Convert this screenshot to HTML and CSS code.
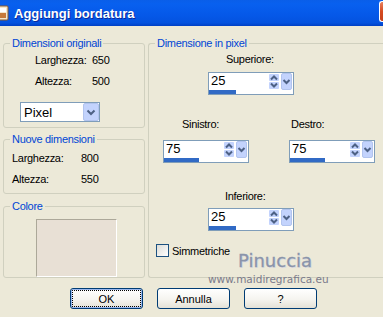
FILE: index.html
```html
<!DOCTYPE html>
<html>
<head>
    <meta charset="UTF-8">
    <title>Aggiungi bordatura</title>
    <link rel="stylesheet" href="styles.css">
</head>
<body>

<div class="window">
    <div class="titlebar">
        <svg class="app-icon" width="9" height="16" viewBox="7 0 9 16">
            <rect x="1" y="1" width="14" height="14" rx="1" fill="#f4e7cc" stroke="#8a5a2c"/>
            <rect x="3" y="8" width="10" height="5" fill="#c77a3a"/>
            <rect x="3" y="3" width="10" height="4" fill="#ffffff"/>
        </svg>
        <span class="title">Aggiungi bordatura</span>
        <span class="close-btn"></span>
    </div>

    <div class="content">
        <div class="panels">
            <div class="left-col">
                <fieldset class="group group-orig">
                    <legend>Dimensioni originali</legend>
                    <div class="dims dims-orig">
                        <span>Larghezza:</span><span>650</span>
                        <span>Altezza:</span><span>500</span>
                    </div>
                    <div class="select">
                        <span class="select-text">Pixel</span>
                        <svg class="select-btn" width="16" height="18" viewBox="0 0 16 18">
                            <rect x="0.5" y="0.5" width="15" height="17" rx="1.5" fill="#c3d3fd" stroke="#b2c4ee"/>
                            <path d="M4.5 7.5 L8 11 L11.5 7.5" stroke="#4d6185" stroke-width="2" fill="none"/>
                        </svg>
                    </div>
                </fieldset>

                <fieldset class="group group-new">
                    <legend>Nuove dimensioni</legend>
                    <div class="dims dims-new">
                        <span>Larghezza:</span><span>800</span>
                        <span>Altezza:</span><span>550</span>
                    </div>
                </fieldset>

                <fieldset class="group group-color">
                    <legend>Colore</legend>
                    <div class="swatch"></div>
                </fieldset>
            </div>

            <fieldset class="group group-pixel">
                <legend>Dimensione in pixel</legend>

                <div class="lbl lbl-sup">Superiore:</div>
                <div class="spinner spin-top">
                    <div class="spin-field">
                        <span class="spin-value">25</span>
                        <svg class="spin-btns" width="24" height="17" viewBox="0 0 24 17">
                            <rect x="0" y="1" width="10" height="7" rx="1" fill="#c3d3fd"/>
                            <rect x="0" y="9" width="10" height="7" rx="1" fill="#c3d3fd"/>
                            <path d="M2 6.5 L5 3.5 L8 6.5" stroke="#4d6185" stroke-width="2" fill="none"/>
                            <path d="M2 10.5 L5 13.5 L8 10.5" stroke="#4d6185" stroke-width="2" fill="none"/>
                            <rect x="12.5" y="0.5" width="10" height="16" rx="1.5" fill="#c3d3fd" stroke="#b2c4ee"/>
                            <path d="M14.5 7 L17.5 10 L20.5 7" stroke="#4d6185" stroke-width="2" fill="none"/>
                        </svg>
                    </div>
                    <div class="spin-track"><div class="spin-fill" style="width:27px"></div></div>
                </div>

                <div class="side-row">
                    <div class="side-col side-left">
                        <div class="lbl lbl-left">Sinistro:</div>
                        <div class="spinner">
                            <div class="spin-field">
                                <span class="spin-value">75</span>
                                <svg class="spin-btns" width="24" height="17" viewBox="0 0 24 17">
                                    <rect x="0" y="1" width="10" height="7" rx="1" fill="#c3d3fd"/>
                                    <rect x="0" y="9" width="10" height="7" rx="1" fill="#c3d3fd"/>
                                    <path d="M2 6.5 L5 3.5 L8 6.5" stroke="#4d6185" stroke-width="2" fill="none"/>
                                    <path d="M2 10.5 L5 13.5 L8 10.5" stroke="#4d6185" stroke-width="2" fill="none"/>
                                    <rect x="12.5" y="0.5" width="10" height="16" rx="1.5" fill="#c3d3fd" stroke="#b2c4ee"/>
                                    <path d="M14.5 7 L17.5 10 L20.5 7" stroke="#4d6185" stroke-width="2" fill="none"/>
                                </svg>
                            </div>
                            <div class="spin-track"><div class="spin-fill" style="width:35px"></div></div>
                        </div>
                    </div>
                    <div class="side-col side-right">
                        <div class="lbl lbl-right">Destro:</div>
                        <div class="spinner">
                            <div class="spin-field">
                                <span class="spin-value">75</span>
                                <svg class="spin-btns" width="24" height="17" viewBox="0 0 24 17">
                                    <rect x="0" y="1" width="10" height="7" rx="1" fill="#c3d3fd"/>
                                    <rect x="0" y="9" width="10" height="7" rx="1" fill="#c3d3fd"/>
                                    <path d="M2 6.5 L5 3.5 L8 6.5" stroke="#4d6185" stroke-width="2" fill="none"/>
                                    <path d="M2 10.5 L5 13.5 L8 10.5" stroke="#4d6185" stroke-width="2" fill="none"/>
                                    <rect x="12.5" y="0.5" width="10" height="16" rx="1.5" fill="#c3d3fd" stroke="#b2c4ee"/>
                                    <path d="M14.5 7 L17.5 10 L20.5 7" stroke="#4d6185" stroke-width="2" fill="none"/>
                                </svg>
                            </div>
                            <div class="spin-track"><div class="spin-fill" style="width:35px"></div></div>
                        </div>
                    </div>
                </div>

                <div class="lbl lbl-inf">Inferiore:</div>
                <div class="spinner spin-bottom">
                    <div class="spin-field">
                        <span class="spin-value">25</span>
                        <svg class="spin-btns" width="24" height="17" viewBox="0 0 24 17">
                            <rect x="0" y="1" width="10" height="7" rx="1" fill="#c3d3fd"/>
                            <rect x="0" y="9" width="10" height="7" rx="1" fill="#c3d3fd"/>
                            <path d="M2 6.5 L5 3.5 L8 6.5" stroke="#4d6185" stroke-width="2" fill="none"/>
                            <path d="M2 10.5 L5 13.5 L8 10.5" stroke="#4d6185" stroke-width="2" fill="none"/>
                            <rect x="12.5" y="0.5" width="10" height="16" rx="1.5" fill="#c3d3fd" stroke="#b2c4ee"/>
                            <path d="M14.5 7 L17.5 10 L20.5 7" stroke="#4d6185" stroke-width="2" fill="none"/>
                        </svg>
                    </div>
                    <div class="spin-track"><div class="spin-fill" style="width:27px"></div></div>
                </div>

                <div class="check-row">
                    <span class="checkbox"></span>
                    <span>Simmetriche</span>
                </div>
            </fieldset>
        </div>

        <div class="buttons">
            <div class="btn btn-default">OK</div>
            <div class="btn">Annulla</div>
            <div class="btn">?</div>
        </div>
    </div>

    <div class="watermark">Pinuccia</div>
    <div class="watermark-url">www.maidiregrafica.eu</div>
</div>

</body>
</html>
```

FILE: styles.css
```css
html, body {
    margin: 0;
    overflow: hidden;
    background: #ece9d8;
}

body {
    font-family: "Liberation Sans", Arial, sans-serif;
    font-size: 11px;
    color: black;
}

.window {
    position: relative;
    width: 383px;
    height: 317px;
    overflow: hidden;
}

.titlebar {
    height: 26px;
    display: flex;
    align-items: center;
    background: linear-gradient(#0a5ee9 0%, #0860ef 15%, #0558e8 60%, #0452de 88%, #003fc4 100%);
    color: white;
}

.title {
    margin-left: 5px;
    font-size: 13px;
    font-weight: bold;
    line-height: 15px;
    text-shadow: 1px 1px 0 #0b2a9a;
}

.close-btn {
    margin-left: auto;
    margin-bottom: 3px;
    width: 4px;
    height: 21px;
    box-sizing: border-box;
    border: 1px solid #ffffff;
    border-right: none;
    border-radius: 3px 0 0 3px;
    background: linear-gradient(#e8825f, #d64a20 50%, #c5421c);
}

.content {
    padding: 11px 0 0 3px;
}

.panels {
    display: flex;
    gap: 3px;
}

.left-col {
    width: 142px;
    display: flex;
    flex-direction: column;
}

.group {
    margin: 0;
    padding: 0;
    border: 1px solid #d0d0bf;
    border-radius: 3px;
    min-width: 0;
}

.group legend {
    margin-left: 6px;
    padding: 0 2px;
    color: #0046d5;
    line-height: 13px;
    letter-spacing: -0.3px;
}

.dims {
    display: grid;
    row-gap: 8px;
    line-height: 13px;
    letter-spacing: -0.3px;
}

.dims-orig {
    margin-top: 4px;
    padding-left: 31px;
    grid-template-columns: 57px auto;
}

.select {
    margin: 14px 0 0 16px;
    width: 80px;
    height: 20px;
    box-sizing: border-box;
    border: 1px solid #7f9db9;
    background: white;
    display: flex;
    align-items: center;
    justify-content: space-between;
}

.select-text {
    padding-left: 3px;
    font-size: 13px;
}

.group-orig {
    padding-bottom: 5px;
}

.group-new {
    margin-top: 5px;
    padding-bottom: 7px;
}

.dims-new {
    margin-top: 6px;
    padding-left: 8px;
    grid-template-columns: 69px auto;
}

.group-color {
    margin-top: 6px;
    flex: 1;
}

.swatch {
    margin: 6px 0 0 32px;
    width: 81px;
    height: 58px;
    box-sizing: border-box;
    border: 1px solid #ffffff;
    border-top-color: #aca899;
    border-left-color: #aca899;
    background: #e8e0d5;
}

.group-pixel {
    flex: 1;
    border-right: none;
    border-radius: 3px 0 0 3px;
}

.lbl {
    line-height: 13px;
    letter-spacing: -0.3px;
}

.lbl-sup {
    margin: 3px 0 0 77px;
}

.spinner {
    width: 86px;
    height: 23px;
    box-sizing: border-box;
    border: 1px solid #7f9db9;
    background: white;
}

.spin-top {
    margin: 6px 0 0 59px;
}

.spin-field {
    height: 17px;
    display: flex;
    justify-content: space-between;
    align-items: flex-start;
}

.spin-value {
    padding-left: 2px;
    font-size: 13px;
    line-height: 14px;
    margin-top: 1px;
}

.spin-track {
    height: 4px;
}

.spin-fill {
    height: 4px;
    background: #316ac5;
}

.side-row {
    margin-top: 23px;
    display: flex;
    gap: 40px;
    padding-left: 14px;
}

.side-col .spinner {
    margin-top: 9px;
}

.lbl-left {
    margin-left: 19px;
}

.lbl-right {
    margin-left: 2px;
}

.lbl-inf {
    margin: 27px 0 0 76px;
}

.spin-bottom {
    margin: 5px 0 0 59px;
}

.check-row {
    margin: 13px 0 0 7px;
    display: flex;
    align-items: center;
    gap: 3px;
    letter-spacing: -0.3px;
}

.checkbox {
    width: 13px;
    height: 13px;
    box-sizing: border-box;
    border: 1px solid #1c5180;
    background: linear-gradient(135deg, #dcdcd7, #ffffff);
}

.buttons {
    margin-top: 10px;
    padding-left: 67px;
    display: flex;
    gap: 14px;
}

.btn {
    width: 73px;
    height: 21px;
    box-sizing: border-box;
    border: 1px solid #003c74;
    border-radius: 3px;
    background: linear-gradient(#ffffff 0%, #f5f4ef 55%, #e4e1d6 100%);
    display: flex;
    align-items: center;
    justify-content: center;
}

.btn-default {
    box-shadow: inset 0 0 0 1px #9bb8ef;
    outline: 1px dotted #000000;
    outline-offset: -3px;
}

.watermark {
    position: absolute;
    left: 238px;
    top: 252px;
    font-family: "DejaVu Sans", sans-serif;
    font-size: 18px;
    line-height: 18px;
    color: #8a94aa;
    -webkit-text-stroke: 0.3px #8a94aa;
    text-shadow: 1px 1px 0 #dadbe0;
}

.watermark-url {
    position: absolute;
    left: 208px;
    top: 273px;
    font-family: "DejaVu Sans", sans-serif;
    font-size: 10.5px;
    line-height: 12px;
    color: #7a7a8a;
}
```
